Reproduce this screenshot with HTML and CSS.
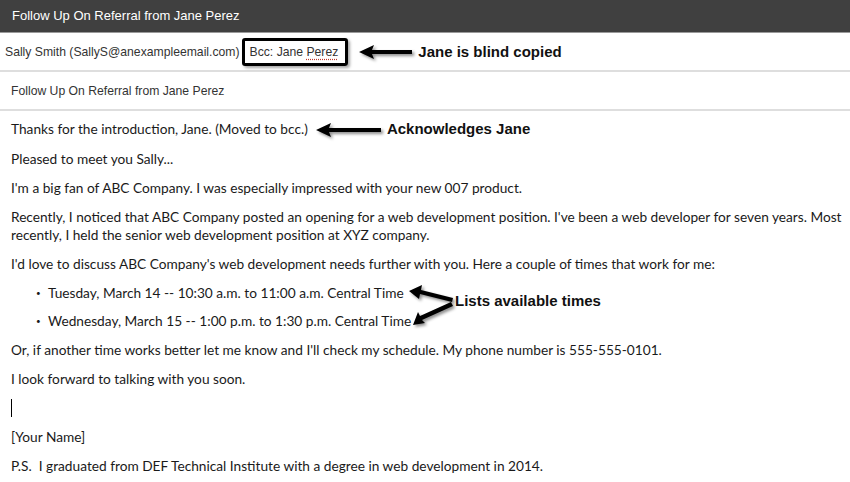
FILE: index.html
```html
<!DOCTYPE html>
<html lang="en">
<head>
  <meta charset="UTF-8">
  <title>Follow Up On Referral from Jane Perez</title>
  <link rel="stylesheet" href="styles.css">
</head>
<body>
<header class="titlebar">Follow Up On Referral from Jane Perez</header>

<div class="row from">
  <span class="sender">Sally Smith (SallyS@anexampleemail.com)</span>
  <span class="bcc">Bcc: Jane <span class="spell">Perez</span></span>
  <svg class="arrow" width="56" height="16" viewBox="0 0 56 16"><polygon points="1,8 16,1 14,6 54,6 54,10 14,10 16,15" fill="#000"/></svg>
  <b class="note">Jane is blind copied</b>
</div>

<div class="row subject">Follow Up On Referral from Jane Perez</div>

<main class="letter">
  <p>Thanks for the introduction, Jane. (Moved to bcc.)
    <svg class="arrow" width="68" height="16" viewBox="0 0 68 16"><polygon points="1,8 16,1 14,6 66,6 66,10 14,10 16,15" fill="#000"/></svg>
    <b class="note ack">Acknowledges Jane</b></p>
  <p>Pleased to meet you Sally...</p>
  <p>I'm a big fan of ABC Company. I was especially impressed with your new 007 product.</p>
  <p class="nowrap">Recently, I noticed that ABC Company posted an opening for a web development position. I've been a web developer for seven years. Most<br>recently, I held the senior web development position at XYZ company.</p>
  <p>I'd love to discuss ABC Company's web development needs further with you. Here a couple of times that work for me:</p>
  <div class="times">
    <ul>
      <li>Tuesday, March 14 -- 10:30 a.m. to 11:00 a.m. Central Time</li>
      <li>Wednesday, March 15 -- 1:00 p.m. to 1:30 p.m. Central Time</li>
    </ul>
    <svg class="arrow fork" width="46" height="44" viewBox="0 0 46 44">
      <polygon points="0,6 13,0 12,5 44,13 43,17 11,9 10,14" fill="#000"/>
      <polygon points="4,40 9,27 11,31 42,17 44,21 13,35 16,38" fill="#000"/>
    </svg>
    <b class="note fork-note">Lists available times</b>
  </div>
  <p>Or, if another time works better let me know and I'll check my schedule. My phone number is 555-555-0101.</p>
  <p>I look forward to talking with you soon.</p>
  <p><span class="caret"></span></p>
  <p>[Your Name]</p>
  <p>P.S.&nbsp; I graduated from DEF Technical Institute with a degree in web development in 2014.</p>
</main>
</body>
</html>
```

FILE: styles.css
```css
body {
  margin: 0;
  background: #fff;
  font-family: "Liberation Sans", Arial, sans-serif;
  color: #333;
}
.titlebar {
  background: #404040;
  color: #fff;
  font-size: 13px;
  height: 32px;
  line-height: 32px;
  padding-left: 12px;
  border-bottom: 1px solid #9a9a9a;
}
.row {
  display: flex;
  align-items: center;
  font-size: 12.2px;
  border-bottom: 2px solid #dedede;
}
.from {
  height: 37px;
  padding-left: 5px;
}
.subject {
  height: 37px;
  padding-left: 11px;
}
.bcc {
  margin-left: 2px;
  padding: 4px 7px 4px 5px;
  border: 3px solid #000;
  border-radius: 3px;
  box-shadow: 2px 2px 3px rgba(0, 0, 0, .35);
  line-height: 14px;
}
.spell {
  text-decoration: underline dotted #c0392b;
  text-underline-offset: 3px;
}
.arrow {
  filter: drop-shadow(2px 2px 1.5px rgba(0, 0, 0, .45));
  vertical-align: middle;
}
.from .arrow {
  margin-left: 10px;
}
.note {
  font-family: "Liberation Sans", Arial, sans-serif;
  font-size: 15px;
  color: #111;
  margin-left: 4px;
}
.note.ack {
  margin-left: 0;
}
.letter {
  padding: 9px 0 0 11px;
  font-family: Lato, "Open Sans", sans-serif;
  font-size: 13.7px;
  color: #1a1a1a;
}
.letter p {
  margin: 0 0 11px;
  line-height: 18px;
  min-height: 18px;
}
.letter p .arrow {
  margin-left: 4px;
  position: relative;
  top: -1px;
}
.nowrap {
  white-space: nowrap;
}
.times {
  position: relative;
}
.times ul {
  margin: 0 0 11px;
  padding-left: 25px;
  list-style: none;
}
.times li {
  line-height: 18px;
  margin-bottom: 10px;
}
.times li::before {
  content: "\2022";
  display: inline-block;
  width: 12px;
  font-size: 8px;
  vertical-align: top;
}
.fork {
  position: absolute;
  left: 398px;
  top: 1px;
}
.fork-note {
  position: absolute;
  left: 444px;
  top: 8px;
  margin-left: 0;
  white-space: nowrap;
}
.caret {
  display: inline-block;
  width: 1px;
  height: 18px;
  background: #000;
  vertical-align: top;
}
```
